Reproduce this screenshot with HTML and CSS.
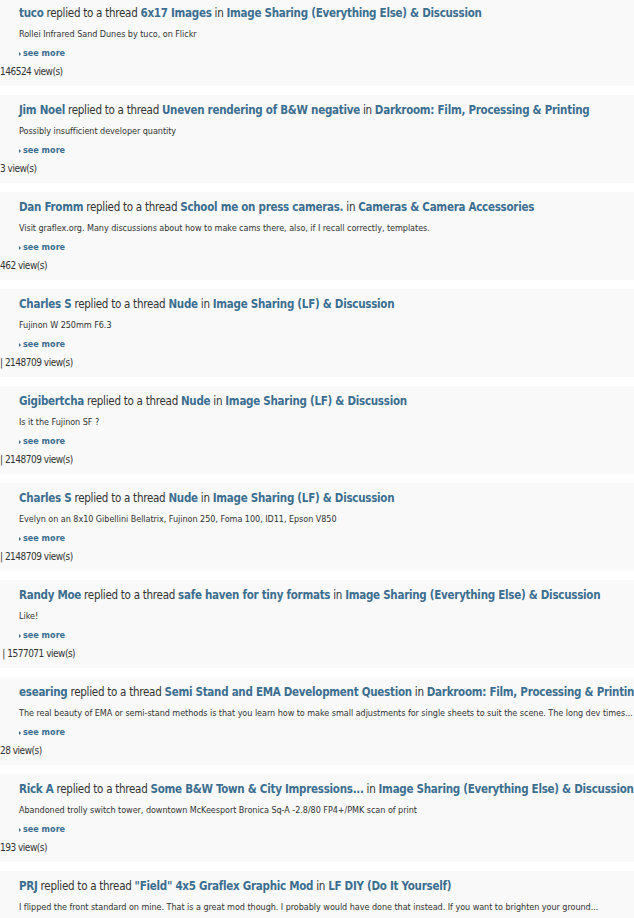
FILE: index.html
```html
<!DOCTYPE html>
<html>
<head>
<meta charset="utf-8">
<link rel="stylesheet" href="styles.css">
</head>
<body>
<ul class="feed">
  <li class="item">
    <div class="title"><a href="#">tuco</a> replied to a thread <a href="#">6x17 Images</a> in <a href="#">Image Sharing (Everything Else) &amp; Discussion</a></div>
    <div class="excerpt">Rollei Infrared Sand Dunes by tuco, on Flickr</div>
    <div class="more"><a href="#"><span class="arrow"></span>see more</a></div>
    <div class="views">146524 view(s)</div>
  </li>
  <li class="item">
    <div class="title"><a href="#">Jim Noel</a> replied to a thread <a href="#">Uneven rendering of B&amp;W negative</a> in <a href="#">Darkroom: Film, Processing &amp; Printing</a></div>
    <div class="excerpt">Possibly insufficient developer quantity</div>
    <div class="more"><a href="#"><span class="arrow"></span>see more</a></div>
    <div class="views">3 view(s)</div>
  </li>
  <li class="item">
    <div class="title"><a href="#">Dan Fromm</a> replied to a thread <a href="#">School me on press cameras.</a> in <a href="#">Cameras &amp; Camera Accessories</a></div>
    <div class="excerpt">Visit graflex.org. Many discussions about how to make cams there, also, if I recall correctly, templates.</div>
    <div class="more"><a href="#"><span class="arrow"></span>see more</a></div>
    <div class="views">462 view(s)</div>
  </li>
  <li class="item">
    <div class="title"><a href="#">Charles S</a> replied to a thread <a href="#">Nude</a> in <a href="#">Image Sharing (LF) &amp; Discussion</a></div>
    <div class="excerpt">Fujinon W 250mm F6.3</div>
    <div class="more"><a href="#"><span class="arrow"></span>see more</a></div>
    <div class="views">| 2148709 view(s)</div>
  </li>
  <li class="item">
    <div class="title"><a href="#">Gigibertcha</a> replied to a thread <a href="#">Nude</a> in <a href="#">Image Sharing (LF) &amp; Discussion</a></div>
    <div class="excerpt">Is it the Fujinon SF ?</div>
    <div class="more"><a href="#"><span class="arrow"></span>see more</a></div>
    <div class="views">| 2148709 view(s)</div>
  </li>
  <li class="item">
    <div class="title"><a href="#">Charles S</a> replied to a thread <a href="#">Nude</a> in <a href="#">Image Sharing (LF) &amp; Discussion</a></div>
    <div class="excerpt">Evelyn on an 8x10 Gibellini Bellatrix, Fujinon 250, Foma 100, ID11, Epson V850</div>
    <div class="more"><a href="#"><span class="arrow"></span>see more</a></div>
    <div class="views">| 2148709 view(s)</div>
  </li>
  <li class="item">
    <div class="title"><a href="#">Randy Moe</a> replied to a thread <a href="#">safe haven for tiny formats</a> in <a href="#">Image Sharing (Everything Else) &amp; Discussion</a></div>
    <div class="excerpt">Like!</div>
    <div class="more"><a href="#"><span class="arrow"></span>see more</a></div>
    <div class="views">&nbsp;| 1577071 view(s)</div>
  </li>
  <li class="item">
    <div class="title"><a href="#">esearing</a> replied to a thread <a href="#">Semi Stand and EMA Development Question</a> in <a href="#">Darkroom: Film, Processing &amp; Printing</a></div>
    <div class="excerpt">The real beauty of EMA or semi-stand methods is that you learn how to make small adjustments for single sheets to suit the scene. The long dev times...</div>
    <div class="more"><a href="#"><span class="arrow"></span>see more</a></div>
    <div class="views">28 view(s)</div>
  </li>
  <li class="item">
    <div class="title"><a href="#">Rick A</a> replied to a thread <a href="#">Some B&amp;W Town &amp; City Impressions...</a> in <a href="#">Image Sharing (Everything Else) &amp; Discussion</a></div>
    <div class="excerpt">Abandoned trolly switch tower, downtown McKeesport Bronica Sq-A -2.8/80 FP4+/PMK scan of print</div>
    <div class="more"><a href="#"><span class="arrow"></span>see more</a></div>
    <div class="views">193 view(s)</div>
  </li>
  <li class="item">
    <div class="title"><a href="#">PRJ</a> replied to a thread <a href="#">"Field" 4x5 Graflex Graphic Mod</a> in <a href="#">LF DIY (Do It Yourself)</a></div>
    <div class="excerpt">I flipped the front standard on mine. That is a great mod though. I probably would have done that instead. If you want to brighten your ground...</div>
    <div class="more"><a href="#"><span class="arrow"></span>see more</a></div>
    <div class="views">view(s)</div>
  </li>
</ul>
</body>
</html>
```

FILE: styles.css
```css
html, body {
  margin: 0;
  padding: 0;
  background: #ffffff;
}
body {
  font-family: "DejaVu Sans Condensed", "DejaVu Sans", Verdana, sans-serif;
  font-stretch: condensed;
  color: #333333;
  overflow: hidden;
}
.feed {
  list-style: none;
  margin: -2px 0 0 0;
  padding: 0;
}
.item {
  background: #f9f9f9;
  padding: 7px 0 7px 0;
  margin-bottom: 9px;
  white-space: nowrap;
  overflow: hidden;
}
.title {
  font-size: 11.5px;
  letter-spacing: -0.27px;
  line-height: 16px;
  padding-left: 19px;
  color: #333;
}
.title a {
  color: #3c6e90;
  font-weight: bold;
  text-decoration: none;
}
.excerpt {
  font-size: 9px;
  letter-spacing: -0.05px;
  line-height: 14px;
  margin-top: 6px;
  padding-left: 19px;
  color: #333;
}
.more {
  font-size: 9px;
  line-height: 14px;
  margin-top: 5px;
  padding-left: 19px;
}
.more a {
  color: #3c6e90;
  font-weight: bold;
  text-decoration: none;
}
.arrow {
  display: inline-block;
  width: 0;
  height: 0;
  border-top: 2px solid transparent;
  border-bottom: 2px solid transparent;
  border-left: 2px solid #3c6e90;
  margin-right: 2px;
  vertical-align: 0;
}
.views {
  font-size: 10px;
  letter-spacing: -0.5px;
  line-height: 14px;
  margin-top: 5px;
  color: #333;
}
```
